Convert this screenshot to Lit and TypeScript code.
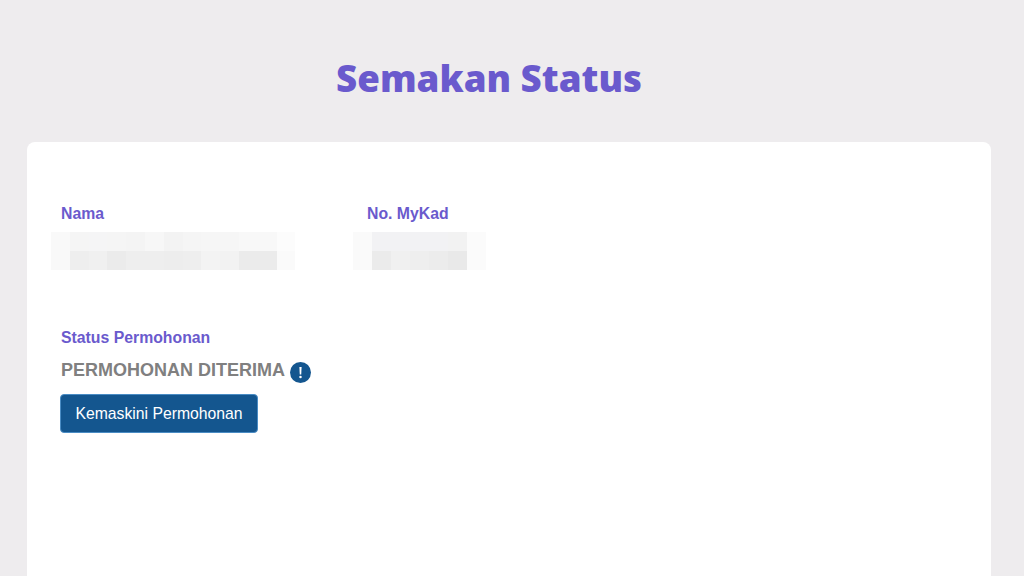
import { LitElement, html, css } from "lit";
import { customElement } from "lit/decorators.js";

const nameRows = [
  ["#f9f9f9","#f5f5f5","#f5f5f6","#f5f5f5","#f4f4f4","#f7f7f7","#f3f3f3","#f5f5f5","#f6f6f6","#f6f6f6","#f8f8f8","#f8f8f8","#fcfcfc"],
  ["#f9f9f9","#eeeeee","#f0f0f0","#ebebeb","#eeeeee","#eeeeee","#ededed","#eeeeee","#f3f3f3","#f2f2f2","#ebebeb","#ebebeb","#fafafa"],
];
const cardRows = [
  ["#fafafa","#f2f2f4","#f2f2f4","#f2f2f4","#f2f2f4","#f2f2f2","#fbfbfb"],
  ["#fafafa","#ebebeb","#f0f0f0","#eeeeee","#ececec","#e9e9e9","#fbfbfb"],
];

@customElement("app-root")
export class AppRoot extends LitElement {
  static styles = css`
    :host { display: block; height: 576px; overflow: hidden; background: #eeecee; font-family: "Liberation Sans", Arial, sans-serif; }
    h1 { margin: 0; padding: 55px 46px 0 0; height: 142px; box-sizing: border-box; text-align: center; font: 900 36.7px/46px "Noto Sans", sans-serif; color: #6a5acd; }
    .card { margin: 0 33px 0 27px; height: 500px; box-sizing: border-box; background: #fff; border-radius: 8px; padding: 61px 33px 0 34px; }
    .fields { display: flex; }
    .field.n { width: 306px; }
    .label { font-size: 15.8px; height: 21px; line-height: 22px; font-weight: 700; color: #6a5acd; }
    .mosaic { display: grid; grid-auto-rows: 19px; margin: 8px 0 0 -10px; }
    .field.n .mosaic { grid-template-columns: repeat(13, 18.8px); }
    .field.c .mosaic { grid-template-columns: repeat(7, 19px); margin-left: -14px; }
    .status { margin-top: 57px; }
    .value { display: flex; align-items: center; gap: 5px; margin-top: 10px; height: 24px; font-size: 18px; font-weight: 700; color: #808080; }
    .info { width: 21px; height: 21px; flex: none; margin-top: 5px; }
    button { display: block; margin: 12px 0 0 -1px; width: 198px; height: 39px; padding: 0; border: 1px solid #4a8cc4; border-radius: 4px; background: #14568f; color: #fff; font: 400 15.75px "Liberation Sans", Arial, sans-serif; }
  `;

  private mosaic(rows: string[][]) {
    return html`<div class="mosaic">${rows.flat().map((c) => html`<div style="background:${c}"></div>`)}</div>`;
  }

  render() {
    return html`
      <h1>Semakan Status</h1>
      <div class="card">
        <div class="fields">
          <div class="field n"><div class="label">Nama</div>${this.mosaic(nameRows)}</div>
          <div class="field c"><div class="label">No. MyKad</div>${this.mosaic(cardRows)}</div>
        </div>
        <div class="status">
          <div class="label">Status Permohonan</div>
          <div class="value">PERMOHONAN DITERIMA
            <svg class="info" viewBox="0 0 21 21"><circle cx="10.5" cy="10.5" r="10.5" fill="#14568f"/><path d="M9.4 5h2.2l-.35 7.4h-1.5z" fill="#fff"/><circle cx="10.5" cy="15" r="1.25" fill="#fff"/></svg>
          </div>
          <button>Kemaskini Permohonan</button>
        </div>
      </div>
    `;
  }
}
